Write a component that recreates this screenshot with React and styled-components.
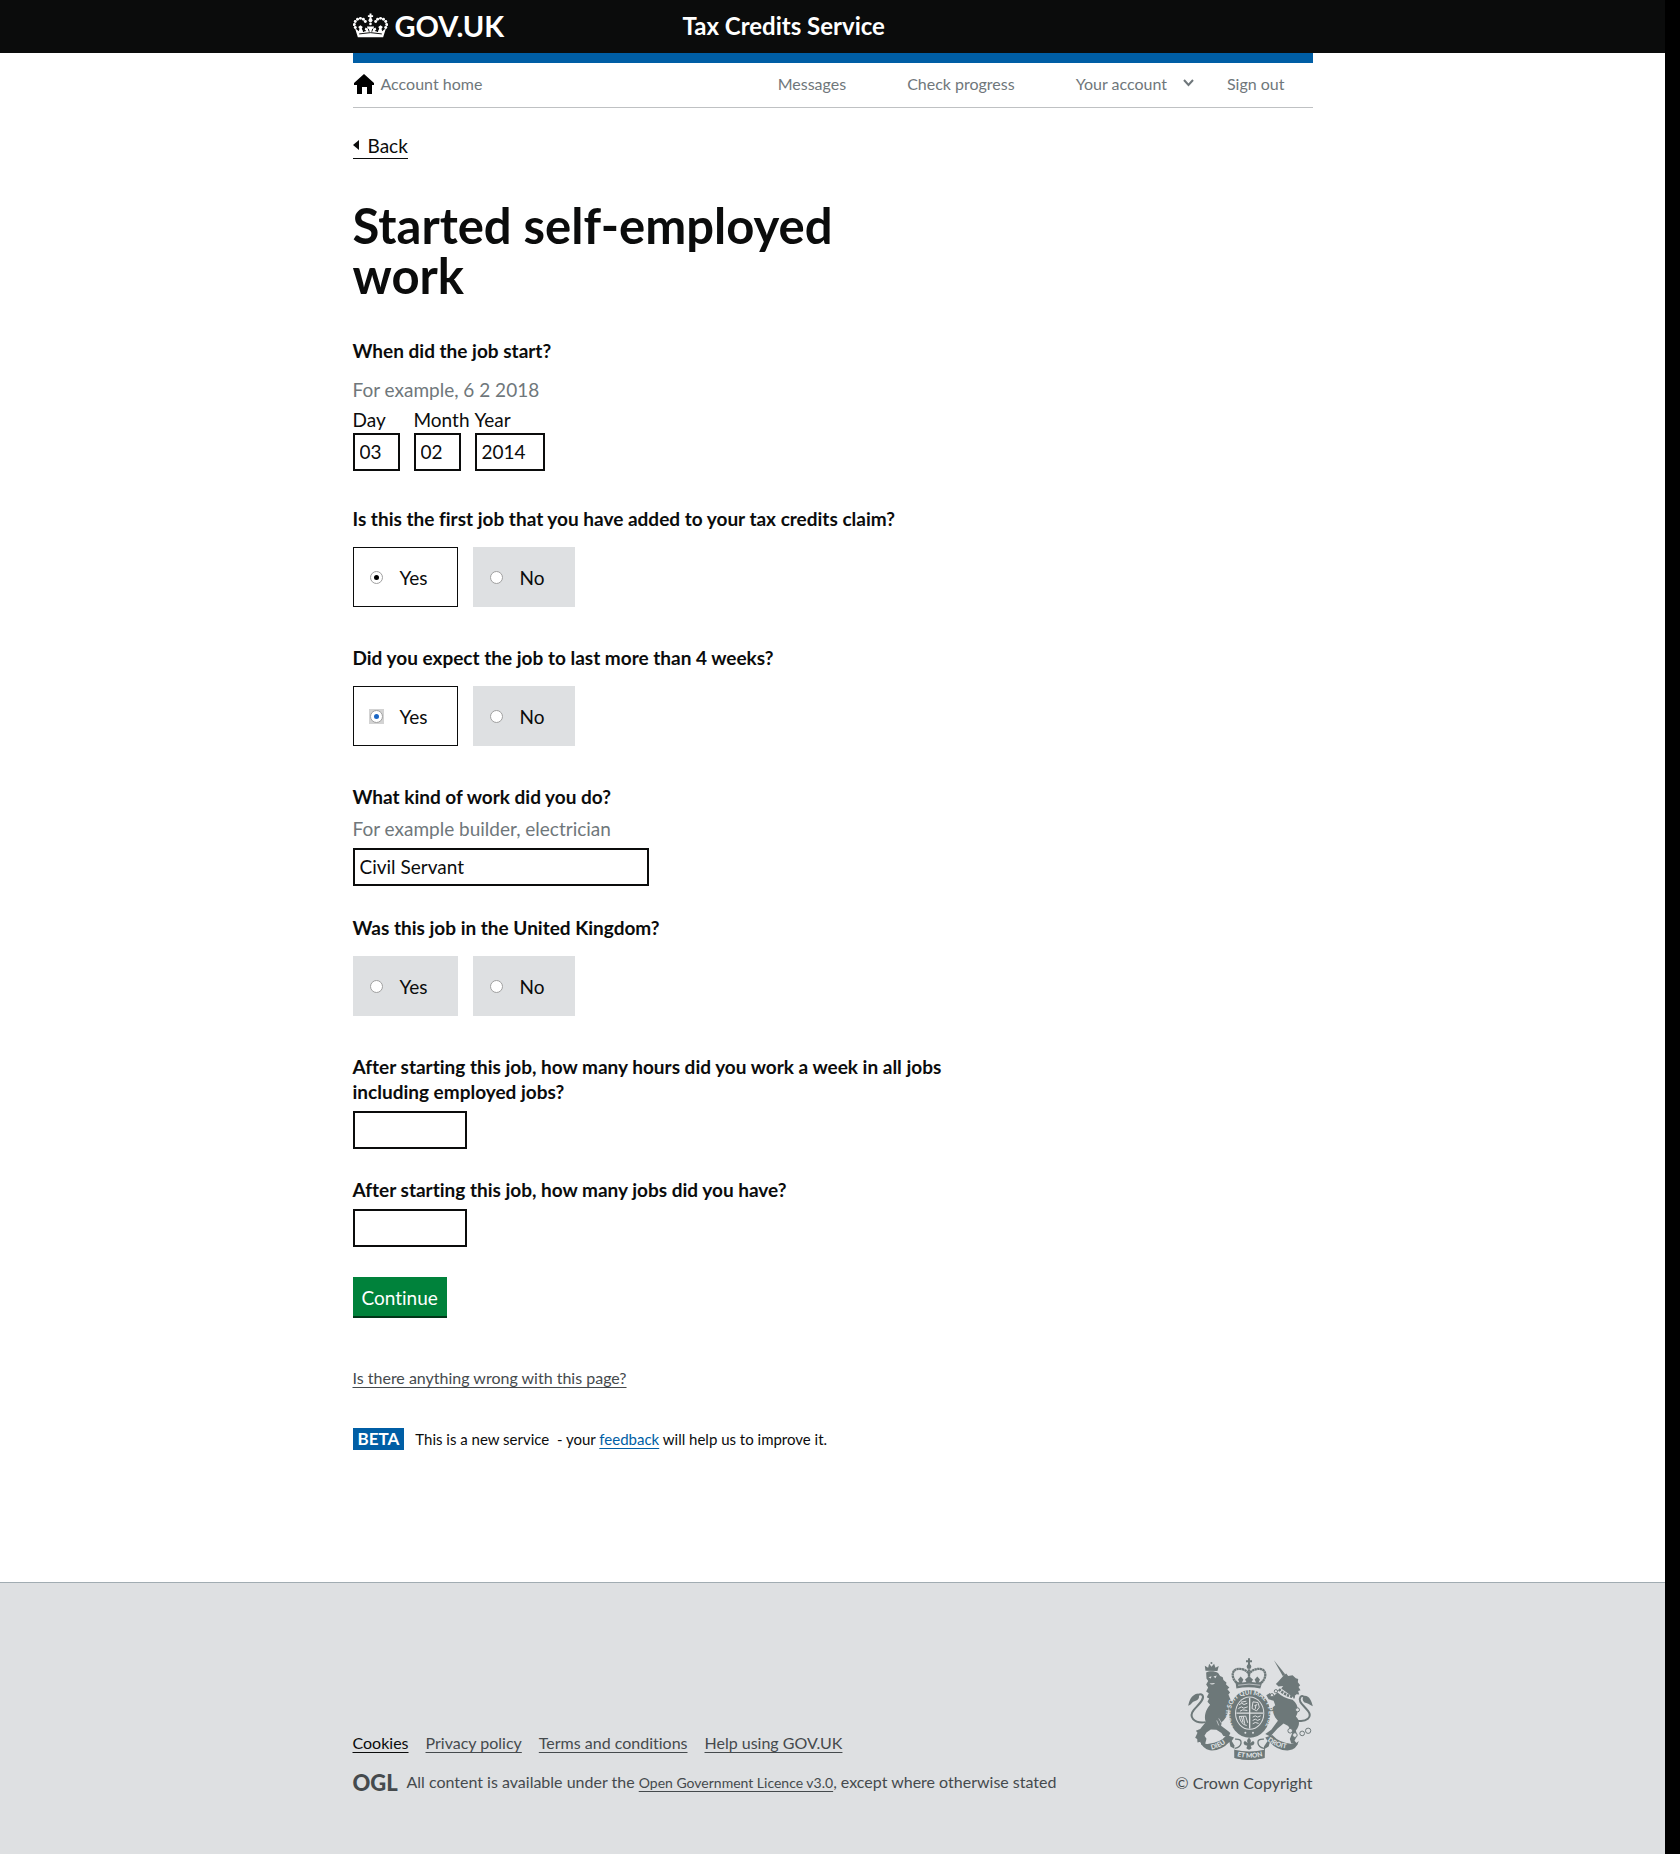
import React from "react";
import styled, { createGlobalStyle } from "styled-components";

const Global = createGlobalStyle`
  *, *::before, *::after { box-sizing: border-box; }
  body { margin: 0; background: #fff; color: #0b0c0c; font-variant-ligatures: none; }
  body, button, input { font-family: Lato, "Liberation Sans", sans-serif; }
  button, input { font-variant-ligatures: none; }
  p, h1, ul, fieldset { margin: 0; padding: 0; }
  fieldset { border: 0; min-width: 0; }
  ul { list-style: none; }
`;

const Page = styled.div`
  min-height: 100vh;
  display: flex;
  flex-direction: column;
  border-right: 15px solid #000;
`;

const Container = styled.div`
  width: 100%;
  max-width: 960px;
  margin: 0 auto;
`;

const Header = styled.header`
  background: #0b0c0c;
  color: #fff;
`;

const HeaderInner = styled(Container)`
  height: 53px;
  padding-bottom: 2px;
  display: flex;
  align-items: center;
`;

const Brand = styled.a`
  flex: 0 0 330px;
  display: flex;
  align-items: center;
  gap: 7px;
  color: #fff;
  font-size: 29px;
  font-weight: 700;
  line-height: 36px;
  text-decoration: none;
`;

const ServiceName = styled.a`
  color: #fff;
  font-size: 24px;
  font-weight: 700;
  line-height: 36px;
  text-decoration: none;
`;

const Nav = styled.nav`
  display: flex;
  justify-content: space-between;
  align-items: center;
  height: 55px;
  padding-bottom: 2px;
  border-top: 10px solid #005ea5;
  border-bottom: 1px solid #bfc1c3;
`;

const NavList = styled.ul`
  display: flex;
  gap: 33px;
`;

const NavItem = styled.li`
  padding-right: 28px;
  &:has(button) { padding-right: 0; }
`;

const NavLink = styled.a`
  display: flex;
  align-items: center;
  gap: 6px;
  color: #6f777b;
  font-size: 16px;
  line-height: 24px;
  text-decoration: none;
`;

const NavToggle = styled.button`
  display: flex;
  align-items: center;
  gap: 16px;
  padding: 0;
  border: 0;
  background: none;
  color: #6f777b;
  font-size: 16px;
  line-height: 24px;
`;

const Main = styled.main`
  flex: 1;
  padding: 26px 0 132px;
`;

const BackLink = styled.a`
  display: inline-flex;
  align-items: center;
  gap: 9px;
  height: 25px;
  padding-bottom: 2px;
  border-bottom: 1px solid #0b0c0c;
  color: #0b0c0c;
  font-size: 19px;
  text-decoration: none;
  &::before {
    content: "";
    border: 5px solid transparent;
    border-right: 6px solid #0b0c0c;
    border-left: 0;
  }
`;

const Title = styled.h1`
  max-width: 560px;
  margin-top: 41px;
  font-size: 49px;
  font-weight: 700;
  line-height: 50px;
`;

const Form = styled.form`
  max-width: 600px;
  margin-top: 38px;
  display: flex;
  flex-direction: column;
  align-items: flex-start;
`;

const Question = styled.fieldset`
  margin-bottom: ${(p) => p.$after}px;
`;

const questionText = `
  display: block;
  padding: 0;
  font-size: 19px;
  font-weight: 700;
  line-height: 25px;
`;
const Legend = styled.legend`
  ${questionText}
`;
const FieldLabel = styled.label`
  ${questionText}
`;

const Field = styled.div`
  display: flex;
  flex-direction: column;
  align-items: flex-start;
  gap: 7px;
  margin-bottom: ${(p) => p.$after}px;
`;

const Hint = styled.p`
  color: #6f777b;
  font-size: 19px;
  line-height: 25px;
`;

const DateHint = styled(Hint)`
  margin: 14px 0 5px;
`;

const DateRow = styled.div`
  display: flex;
  gap: 14px;
`;

const DatePart = styled.label`
  display: flex;
  flex-direction: column;
  gap: 1px;
  width: ${(p) => p.$width}px;
  font-size: 19px;
  line-height: 25px;
  white-space: nowrap;
`;

const TextInput = styled.input`
  width: ${(p) => p.$width}px;
  max-width: 100%;
  height: 38px;
  padding: 0 5px 1px;
  border: 2px solid #0b0c0c;
  border-radius: 0;
  background: #fff;
  color: #0b0c0c;
  font-size: 19px;
`;

const Choices = styled.div`
  display: flex;
  gap: 15px;
  margin-top: 16px;
`;

const Choice = styled.label`
  display: flex;
  align-items: center;
  gap: 16px;
  height: 60px;
  padding: 0 29px 0 15px;
  border: 1px solid #dee0e2;
  background: #dee0e2;
  font-size: 19px;
  line-height: 25px;
  &:has(input:checked) {
    border-color: #0b0c0c;
    background: #fff;
  }
`;

const RadioFrame = styled.span`
  display: flex;
  padding: 1px;
  &:has(input:focus) { background: #d3d3d3; }
`;

const Radio = styled.input`
  appearance: none;
  display: grid;
  place-items: center;
  width: 13px;
  height: 13px;
  margin: 0;
  border: 1px solid #a0a0a0;
  border-radius: 50%;
  outline: 0;
  background: #fff;
  color: #000;
  &:checked::before {
    content: "";
    width: 5px;
    height: 5px;
    border-radius: 50%;
    background: currentColor;
  }
  &:focus { color: #1b66c4; }
`;

const Submit = styled.button`
  height: 39px;
  padding: 2px 9px 0;
  border: 0;
  background: #00823b;
  box-shadow: 0 2px 0 #003618;
  color: #fff;
  font-size: 19px;
  line-height: 25px;
`;

const TextLink = styled.a`
  color: ${(p) => p.$color || "#454a4d"};
  text-decoration: underline;
  text-decoration-thickness: 1px;
  text-underline-offset: 3px;
`;

const Report = styled.p`
  margin-top: 50px;
  font-size: 16px;
  line-height: 24px;
`;

const Phase = styled.p`
  display: flex;
  align-items: center;
  gap: 11px;
  margin-top: 38px;
  font-size: 15px;
  line-height: 22px;
  white-space: pre-wrap;
`;

const PhaseTag = styled.strong`
  padding: 0 5px;
  background: #005ea5;
  color: #fff;
  font-size: 17px;
  font-weight: 700;
`;

const Footer = styled.footer`
  border-top: 1px solid #a1acb2;
  background: #dee0e2;
  color: #454a4d;
  font-size: 16px;
  line-height: 24px;
`;

const FooterInner = styled(Container)`
  display: flex;
  justify-content: space-between;
  align-items: flex-end;
  padding: 75px 0 59px;
`;

const FooterLinks = styled.ul`
  display: flex;
  gap: 17px;
  margin-bottom: 15px;
`;

const Licence = styled.div`
  display: flex;
  align-items: center;
  gap: 11px;
`;

const OglMark = styled.span`
  width: 43px;
  font-size: 22px;
  font-weight: 900;
`;

const SmallLink = styled(TextLink)`
  font-size: 14px;
`;

const Copyright = styled.a`
  display: flex;
  flex-direction: column;
  align-items: flex-end;
  gap: 11px;
  color: #454a4d;
  text-decoration: none;
`;

function CrownLogo() {
  const beads = [[15, 60], [12, 51], [15, 42], [22, 35], [31, 32], [40, 35], [46, 42]];
  return (
    <svg width="35" height="25" viewBox="8 16 108 76" fill="#fff" aria-hidden="true">
      {beads.map(([x, y]) => (
        <g key={x + "-" + y}>
          <circle cx={x} cy={y} r="4.6" />
          <circle cx={124 - x} cy={y} r="4.6" />
        </g>
      ))}
      <path d="M59 17h6v5h5v6h-5v7h-6v-7h-5v-6h5z" />
      <circle cx="62" cy="38" r="6" />
      <circle cx="62" cy="49" r="4" />
      <path d="M14 62l12 10 2-8-4-5 7-6 7 6-3 5 5 9 9-2-5-5 3-6 6 4-2-7h22l-2 7 6-4 3 6-5 5 9 2 5-9-3-5 7-6 7 6-4 5 2 8 12-10-9 28H23z" />
      <path d="M27 80q35-8 70 0" fill="none" stroke="#0b0c0c" strokeWidth="3" />
      <path d="M42 60l-2 14M82 60l2 14M55 64l3 9M69 64l-3 9" stroke="#0b0c0c" strokeWidth="3" />
    </svg>
  );
}

function HomeIcon() {
  return (
    <svg width="22" height="20" viewBox="0 0 22 20" fill="#000" aria-hidden="true">
      <path d="M11 0l10 9v2h-2v9h-5v-7H9v7H4v-9H1V9z" />
    </svg>
  );
}

function Chevron() {
  return (
    <svg width="11" height="10" viewBox="0 0 11 10" fill="none" stroke="#6f777b" strokeWidth="2" aria-hidden="true">
      <path d="M1 1l4.500 5L10 1" />
    </svg>
  );
}

const INK = "#6d7879";
const PAPER = "#dee0e2";

function Crest() {
  return (
    <svg width="125" height="102" viewBox="12 14 375 307" fill={INK} aria-hidden="true">
      <defs>
        <path id="garter" d="M149 222C130 190 134 126 196 124C262 126 264 194 239 226" />
        <path id="dieu" d="M78 290Q112 286 138 257" />
        <path id="mon" d="M154 308Q196 321 240 308" />
        <path id="droit" d="M247 260Q280 287 322 287" />
      </defs>

      {/* lion */}
      <path d="M64 52l-2-15 10 6 3-12 7 9 8-9 4 12 10-5-4 15z" />
      <circle cx="82" cy="29" r="3" />
      <path d="M66 58C75 52 92 53 102 59L108 68 116 72 118 80 127 88 126 94 136 103 130 108 138 118 133 124 138 136 145 149 150 178 139 178 134 164C133 184 124 199 113 207L111 218 130 232 139 240 134 250 118 249 112 240 97 230 80 229 67 238 61 248 67 257 63 273 52 276 49 266 40 268 39 258 33 254 40 239 35 233 48 228 65 207C58 188 66 169 78 155L70 146 75 136 68 132 74 120 66 115 72 103 66 94 72 83 67 76z" />
      <path d="M73 72l9-3-2 7zM88 70l10-3-4 8zM76 91q9 7 17-2" fill={PAPER} />
      <path d="M65 207C27 212 13 190 29 170C43 154 63 137 55 126Q48 119 36 129" fill="none" stroke={INK} strokeWidth="6" />
      <path d="M12 158C16 142 20 126 40 121C51 131 41 143 31 144C24 145 22 154 12 158z" />
      <path d="M98 202l6 15M104 196l8 14" stroke={PAPER} strokeWidth="2" />

      {/* unicorn */}
      <path d="M270 21L297 69 304 63z" />
      <path d="M300 66L307 61 313 68 326 66 336 75 343 77 342 87 349 96 344 101 350 111 343 113 346 124 338 123 328 132 292 106 298 98 284 100 276 92 284 84z" />
      <path d="M285 108Q304 128 333 132" fill="none" stroke={INK} strokeWidth="8" strokeDasharray="7 3" />
      <path d="M281 118Q300 136 326 140C344 154 346 176 336 190C350 203 347 218 336 232L340 247 332 263 342 274 322 271 318 258 325 240 313 219 299 211 281 226 259 250 244 243 262 230 282 203 274 193 265 174 251 184 245 169 256 164 265 164 274 156 269 143 254 138 247 126 258 119 266 131z" />
      <path d="M337 202C370 209 386 191 373 174C358 155 341 145 350 131Q357 124 364 136" fill="none" stroke={INK} strokeWidth="6" />
      <path d="M360 128C377 126 383 144 387 159C377 155 369 148 362 148C355 141 355 134 360 128z" />
      <g fill={PAPER} stroke={INK} strokeWidth="3">
        <circle cx="341" cy="170" r="6" />
        <circle cx="319" cy="233" r="7" />
        <circle cx="333" cy="246" r="7" />
        <circle cx="355" cy="241" r="7" />
        <circle cx="373" cy="233" r="8" />
        <circle cx="276" cy="114" r="5" />
        <circle cx="264" cy="126" r="5" />
      </g>

      {/* crown */}
      <path d="M192 15h6v6h6v6h-6v8h-6v-8h-6v-6h6z" />
      <circle cx="195" cy="40" r="7" />
      <path d="M157 88C137 68 146 43 169 47C181 48 190 54 195 62C200 54 209 48 221 47C244 43 253 68 233 88" fill="none" stroke={INK} strokeWidth="7" strokeDasharray="7 1" />
      <path d="M195 48v40" stroke={INK} strokeWidth="7" strokeDasharray="6 1" />
      <path d="M154 83l12 5-4-9 8-9 8 9-4 9 13-2-4-7 12-10 12 10-4 7 13 2-4-9 8-9 8 9-4 9 12-5-7 23q-36-8-72 0z" />
      <path d="M162 96q33-7 67 0" fill="none" stroke={PAPER} strokeWidth="2" />

      {/* garter and shield */}
      <ellipse cx="197" cy="182" rx="62" ry="72" />
      <ellipse cx="197" cy="180" rx="44" ry="50" fill={PAPER} />
      <ellipse cx="197" cy="180" rx="41" ry="47" />
      <path d="M197 134v92M157 180h80" stroke={PAPER} strokeWidth="4" />
      <g fill="none" stroke={PAPER} strokeWidth="3">
        <path d="M165 155l8-5 7 4 10-4M163 166l9-5 7 4 12-4M168 174l8-4 14 2M171 147l16-3" />
        <path d="M207 146l15 2 4 14-8 11-14-7zM211 158l9-4M214 167l2-12" />
        <path d="M166 190q4 24 22 27M172 190l5 18M178 190l4 22M165 190l20-1 6 20" />
        <path d="M206 192l8-4 7 4 9-4M206 202l8-4 7 4 8-4M206 212l8-4 10 3" />
      </g>
      <text fill={PAPER} fontFamily="Lato, sans-serif" fontSize="19" fontWeight="900">
        <textPath href="#garter" startOffset="2">HONI SOIT QUI MAL Y PENSE</textPath>
      </text>
      <circle cx="184" cy="239" r="3" fill={PAPER} />
      <circle cx="207" cy="239" r="3" fill={PAPER} />

      {/* motto ribbon */}
      <path d="M47 264Q61 276 74 272Q108 270 128 246L150 253 143 264 153 280 153 298 240 298 240 280 251 264 244 253 265 246Q287 270 320 272Q334 276 345 264Q337 291 315 292Q281 294 258 267L254 280 243 287 241 315Q196 326 152 315L151 287 139 280 136 267Q110 295 77 292Q57 289 47 264z" />
      <path d="M152 254q16-1 21 11t-13 15h72q-20-2-15-15t25-11v6q-13 0-17 8t14 11v13q-44 11-88 0v-13q15-2 13-11t-12-8z" fill={PAPER} />
      <path d="M153 258q20-1 18 12t-18 16M240 258q-20-1-18 12t18 16" fill="none" stroke={INK} strokeWidth="4" />
      <path d="M151 290Q196 301 242 290V315Q196 327 151 315z" />
      <path d="M195 254q9 7 4 16l8-6q8 5 1 12l-8 2 3 8q-8 9-16 0l3-8-8-2q-7-7 1-12l8 6q-5-9 4-16z" />
      <g fill={PAPER} fontFamily="Lato, sans-serif" fontSize="20" fontWeight="900">
        <text><textPath href="#dieu" startOffset="4">DIEU</textPath></text>
        <text><textPath href="#mon" startOffset="5">ET MON</textPath></text>
        <text><textPath href="#droit" startOffset="4">DROIT</textPath></text>
      </g>
    </svg>
  );
}

function YesNo({ name, question, value, focused }) {
  return (
    <Question $after={38}>
      <Legend>{question}</Legend>
      <Choices>
        {["Yes", "No"].map((option) => (
          <Choice key={option}>
            <RadioFrame>
              <Radio
                type="radio"
                name={name}
                value={option}
                defaultChecked={value === option}
                autoFocus={focused && value === option}
              />
            </RadioFrame>
            {option}
          </Choice>
        ))}
      </Choices>
    </Question>
  );
}

export default function App() {
  return (
    <>
      <Global />
      <Page>
        <Header>
          <HeaderInner>
            <Brand href="#"><CrownLogo />GOV.UK</Brand>
            <ServiceName href="#">Tax Credits Service</ServiceName>
          </HeaderInner>
        </Header>

        <Container>
          <Nav aria-label="Account">
            <NavLink href="#"><HomeIcon />Account home</NavLink>
            <NavList>
              <NavItem><NavLink href="#">Messages</NavLink></NavItem>
              <NavItem><NavLink href="#">Check progress</NavLink></NavItem>
              <NavItem><NavToggle type="button">Your account<Chevron /></NavToggle></NavItem>
              <NavItem><NavLink href="#">Sign out</NavLink></NavItem>
            </NavList>
          </Nav>

          <Main>
            <BackLink href="#">Back</BackLink>
            <Title>Started self-employed work</Title>

            <Form>
              <Question $after={35}>
                <Legend>When did the job start?</Legend>
                <DateHint>For example, 6 2 2018</DateHint>
                <DateRow>
                  <DatePart $width={47}>Day<TextInput $width={47} defaultValue="03" /></DatePart>
                  <DatePart $width={47}>Month<TextInput $width={47} defaultValue="02" /></DatePart>
                  <DatePart $width={70}>Year<TextInput $width={70} defaultValue="2014" /></DatePart>
                </DateRow>
              </Question>

              <YesNo
                name="first-job"
                question="Is this the first job that you have added to your tax credits claim?"
                value="Yes"
              />
              <YesNo
                name="four-weeks"
                question="Did you expect the job to last more than 4 weeks?"
                value="Yes"
                focused
              />

              <Field $after={29}>
                <FieldLabel htmlFor="work">What kind of work did you do?</FieldLabel>
                <Hint>For example builder, electrician</Hint>
                <TextInput id="work" $width={296} defaultValue="Civil Servant" />
              </Field>

              <YesNo name="in-uk" question="Was this job in the United Kingdom?" />

              <Field $after={28}>
                <FieldLabel htmlFor="hours">
                  After starting this job, how many hours did you work a week in all jobs including employed jobs?
                </FieldLabel>
                <TextInput id="hours" $width={114} />
              </Field>

              <Field $after={30}>
                <FieldLabel htmlFor="jobs">After starting this job, how many jobs did you have?</FieldLabel>
                <TextInput id="jobs" $width={114} />
              </Field>

              <Submit type="button">Continue</Submit>
            </Form>

            <Report><TextLink href="#">Is there anything wrong with this page?</TextLink></Report>
            <Phase>
              <PhaseTag>BETA</PhaseTag>
              <span>
                {"This is a new service  - your "}
                <TextLink href="#" $color="#005ea5">feedback</TextLink>
                {" will help us to improve it."}
              </span>
            </Phase>
          </Main>
        </Container>

        <Footer>
          <FooterInner>
            <div>
              <FooterLinks>
                <li><TextLink href="#" $color="#0b0c0c">Cookies</TextLink></li>
                <li><TextLink href="#">Privacy policy</TextLink></li>
                <li><TextLink href="#">Terms and conditions</TextLink></li>
                <li><TextLink href="#">Help using GOV.UK</TextLink></li>
              </FooterLinks>
              <Licence>
                <OglMark>OGL</OglMark>
                <p>
                  All content is available under the{" "}
                  <SmallLink href="#">Open Government Licence v3.0</SmallLink>, except where otherwise stated
                </p>
              </Licence>
            </div>
            <Copyright href="#">
              <Crest />
              © Crown Copyright
            </Copyright>
          </FooterInner>
        </Footer>
      </Page>
    </>
  );
}
